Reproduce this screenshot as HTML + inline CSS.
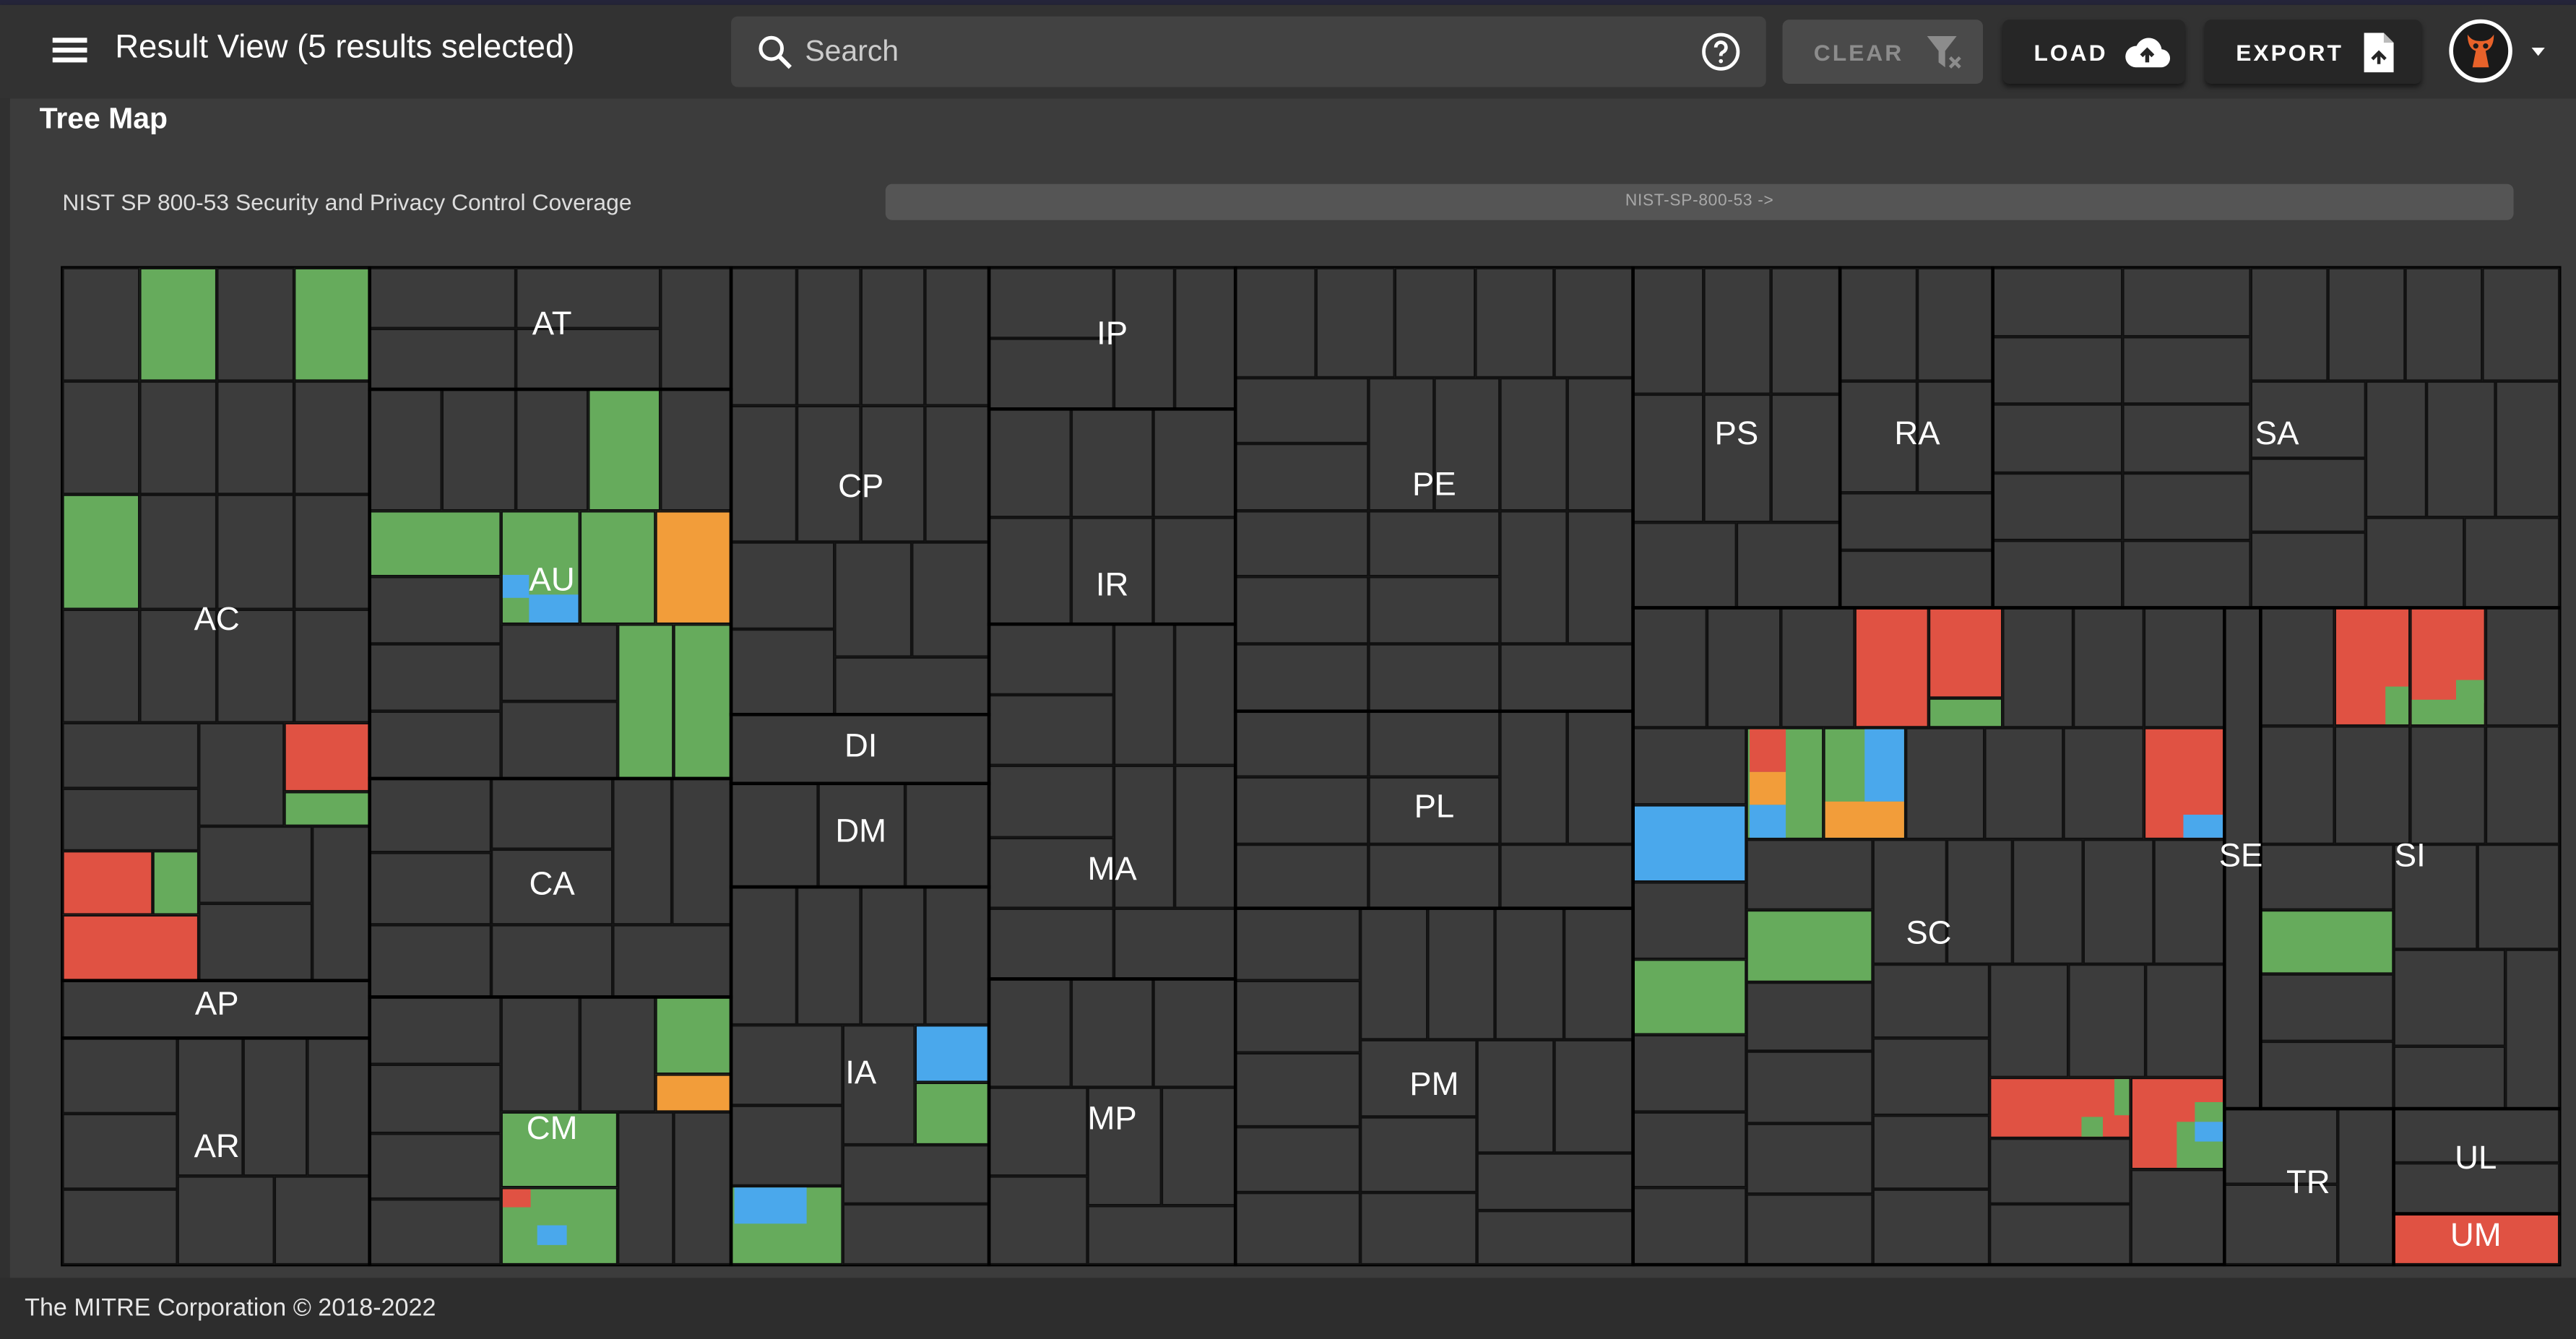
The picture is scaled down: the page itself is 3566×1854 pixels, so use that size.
<!DOCTYPE html>
<html><head><meta charset="utf-8"><style>
html,body{margin:0;padding:0;background:#2d2d2d;width:3566px;height:1854px;overflow:hidden}
#w{position:absolute;left:0;top:0;width:1568px;height:815px;transform:scale(2.27423);transform-origin:0 0;font-family:"Liberation Sans",sans-serif;color:#fff}
.a{position:absolute}
#tm i{position:absolute;box-sizing:border-box;border:1px solid #111;background:#3c3c3c;display:block}
#tm i.g{background:#66ab5c}#tm i.r{background:#e05243}#tm i.o{background:#f29d3a}#tm i.b{background:#4aa8ec}
#tm b{position:absolute;box-sizing:border-box;border:1.6px solid #000;pointer-events:none;display:block}
#tm span{position:absolute;font-size:20px;transform:translate(-50%,-50%);white-space:nowrap;color:#fff}
.btn{position:absolute;top:12px;height:39px;border-radius:4px;font-size:14px;font-weight:bold;letter-spacing:1.3px;display:flex;align-items:center;box-sizing:border-box;padding-left:19px}
</style></head><body><div id="w">
<div class="a" style="left:0;top:0;width:1568px;height:3px;background:#25253a"></div>
<div class="a" style="left:0;top:3px;width:1568px;height:57px;background:#323232;box-shadow:0 2px 4px rgba(0,0,0,.5)"></div>
<div class="a" style="left:6px;top:60px;width:1562px;height:718px;background:#3c3c3c"></div>
<div class="a" style="left:0;top:60px;width:6px;height:718px;background:#303030"></div>
<!-- hamburger -->
<div class="a" style="left:32px;top:23px;width:21px;height:2.5px;background:#fff"></div>
<div class="a" style="left:32px;top:29px;width:21px;height:2.5px;background:#fff"></div>
<div class="a" style="left:32px;top:35px;width:21px;height:2.5px;background:#fff"></div>
<div class="a" style="left:70px;top:18px;font-size:20px">Result View (5 results selected)</div>
<!-- search -->
<div class="a" style="left:445px;top:10px;width:630px;height:43px;background:#424242;border-radius:4px"></div>
<svg class="a" style="left:460px;top:20px" width="24" height="24" viewBox="0 0 24 24"><circle cx="9.5" cy="9.5" r="6.5" fill="none" stroke="#fff" stroke-width="2.2"/><path d="M14.5 14.5L21 21" stroke="#fff" stroke-width="2.6"/></svg>
<div class="a" style="left:490px;top:21px;font-size:18px;color:#ccc">Search</div>
<svg class="a" style="left:1035px;top:19px" width="25" height="25" viewBox="0 0 24 24"><circle cx="12" cy="12" r="10" fill="none" stroke="#fff" stroke-width="2"/><path d="M9 9.5a3 3 0 1 1 4.2 2.7c-.8.4-1.2 1-1.2 1.8v.5" fill="none" stroke="#fff" stroke-width="2"/><circle cx="12" cy="17.5" r="1.2" fill="#fff"/></svg>
<div class="btn" style="left:1085px;width:122px;background:#4a4a4a;color:#8c8c8c">CLEAR
<svg style="margin-left:12px" width="26" height="26" viewBox="0 0 26 26"><path d="M2 3h18l-7 9v10l-4-3v-7z" fill="#8c8c8c"/><path d="M16 16l6 6M22 16l-6 6" stroke="#8c8c8c" stroke-width="2"/></svg></div>
<div class="btn" style="left:1219px;width:111px;background:#262626;box-shadow:0 2px 3px rgba(0,0,0,.5)">LOAD
<svg style="margin-left:10px" width="28" height="22" viewBox="0 0 28 22"><path d="M7 20h15a5.5 5.5 0 0 0 .8-11A8 8 0 0 0 7.5 7 6.5 6.5 0 0 0 7 20z" fill="#fff"/><path d="M14 17V10M10.5 13l3.5-3.5 3.5 3.5" stroke="#262626" stroke-width="2.4" fill="none"/></svg></div>
<div class="btn" style="left:1342px;width:132px;background:#262626;box-shadow:0 2px 3px rgba(0,0,0,.5)">EXPORT
<svg style="margin-left:12px" width="20" height="26" viewBox="0 0 20 26"><path d="M1 1h12l6 6v18H1z" fill="#fff"/><path d="M13 1v6h6" fill="#bbb"/><path d="M6 17l4-4 4 4M10 13v7" stroke="#262626" stroke-width="2" fill="none"/></svg></div>
<svg class="a" style="left:1490px;top:11px" width="40" height="40" viewBox="0 0 40 40"><circle cx="20" cy="20" r="18" fill="#1a1a1a" stroke="#fff" stroke-width="2.5"/><path d="M12 10c0 6 2 9 5 10l-2 10h10l-2-10c3-1 5-4 5-10-2 3-4 4-8 4s-6-1-8-4z" fill="#e8622a"/><circle cx="17" cy="17" r="1.6" fill="#1a1a1a"/><circle cx="23" cy="17" r="1.6" fill="#1a1a1a"/></svg>
<div class="a" style="left:1541px;top:29px;width:0;height:0;border-left:4px solid transparent;border-right:4px solid transparent;border-top:5px solid #fff"></div>
<div class="a" style="left:24px;top:62px;font-size:18px;font-weight:bold">Tree Map</div>
<div class="a" style="left:38px;top:115px;font-size:14px;color:#ddd">NIST SP 800-53 Security and Privacy Control Coverage</div>
<div class="a" style="left:539px;top:112px;width:991px;height:22px;background:#555;border-radius:4px;font-size:10px;color:#a8a8a8;text-align:center;line-height:22px;letter-spacing:.3px">NIST-SP-800-53 -&gt;</div>
<div class="a" style="left:15px;top:788px;font-size:15px;color:#e6e6e6">The MITRE Corporation © 2018-2022</div>

<div id="tm" class="a" style="left:0;top:0;width:1568px;height:815px">
<!-- AC -->
<i style="left:38px;top:163px;width:47px;height:69px"></i><i class="g" style="left:85px;top:163px;width:47px;height:69px"></i><i style="left:132px;top:163px;width:47px;height:69px"></i><i class="g" style="left:179px;top:163px;width:46px;height:69px"></i>
<i style="left:38px;top:232px;width:47px;height:69px"></i><i style="left:85px;top:232px;width:47px;height:69px"></i><i style="left:132px;top:232px;width:47px;height:69px"></i><i style="left:179px;top:232px;width:46px;height:69px"></i>
<i class="g" style="left:38px;top:301px;width:47px;height:70px"></i><i style="left:85px;top:301px;width:47px;height:70px"></i><i style="left:132px;top:301px;width:47px;height:70px"></i><i style="left:179px;top:301px;width:46px;height:70px"></i>
<i style="left:38px;top:371px;width:47px;height:69px"></i><i style="left:85px;top:371px;width:47px;height:69px"></i><i style="left:132px;top:371px;width:47px;height:69px"></i><i style="left:179px;top:371px;width:46px;height:69px"></i>
<i style="left:38px;top:440px;width:83px;height:40px"></i><i style="left:38px;top:480px;width:83px;height:38px"></i><i style="left:121px;top:440px;width:52px;height:63px"></i>
<i class="r" style="left:173px;top:440px;width:52px;height:42px"></i><i class="g" style="left:173px;top:482px;width:52px;height:21px"></i>
<i class="r" style="left:38px;top:518px;width:55px;height:39px"></i><i class="g" style="left:93px;top:518px;width:28px;height:39px"></i>
<i class="r" style="left:38px;top:557px;width:83px;height:40px"></i>
<i style="left:121px;top:503px;width:69px;height:47px"></i><i style="left:121px;top:550px;width:69px;height:47px"></i><i style="left:190px;top:503px;width:35px;height:94px"></i>
<!-- AP -->
<i style="left:38px;top:597px;width:187px;height:35px"></i>
<!-- AR -->
<i style="left:38px;top:632px;width:70px;height:46px"></i><i style="left:38px;top:678px;width:70px;height:46px"></i><i style="left:38px;top:724px;width:70px;height:46px"></i>
<i style="left:108px;top:632px;width:40px;height:84px"></i><i style="left:148px;top:632px;width:39px;height:84px"></i><i style="left:187px;top:632px;width:38px;height:84px"></i>
<i style="left:108px;top:716px;width:59px;height:54px"></i><i style="left:167px;top:716px;width:58px;height:54px"></i>
<!-- AT -->
<i style="left:225px;top:163px;width:89px;height:37px"></i><i style="left:225px;top:200px;width:89px;height:37px"></i><i style="left:314px;top:163px;width:88px;height:37px"></i><i style="left:314px;top:200px;width:88px;height:37px"></i><i style="left:402px;top:163px;width:43px;height:74px"></i>
<!-- AU -->
<i style="left:225px;top:237px;width:44px;height:74px"></i><i style="left:269px;top:237px;width:45px;height:74px"></i><i style="left:314px;top:237px;width:44px;height:74px"></i><i class="g" style="left:358px;top:237px;width:44px;height:74px"></i><i style="left:402px;top:237px;width:43px;height:74px"></i>
<i class="g" style="left:225px;top:311px;width:80px;height:40px"></i><i style="left:225px;top:351px;width:80px;height:41px"></i><i style="left:225px;top:392px;width:80px;height:41px"></i><i style="left:225px;top:433px;width:80px;height:41px"></i>
<i class="g" style="left:305px;top:311px;width:48px;height:69px"></i><i class="b" style="left:306px;top:350px;width:16px;height:14px;border:0"></i><i class="b" style="left:322px;top:362px;width:30px;height:17px;border:0"></i>
<i class="g" style="left:353px;top:311px;width:46px;height:69px"></i><i class="o" style="left:399px;top:311px;width:46px;height:69px"></i>
<i style="left:305px;top:380px;width:71px;height:47px"></i><i style="left:305px;top:427px;width:71px;height:47px"></i><i class="g" style="left:376px;top:380px;width:34px;height:94px"></i><i class="g" style="left:410px;top:380px;width:35px;height:94px"></i>
<!-- CA -->
<i style="left:225px;top:474px;width:74px;height:45px"></i><i style="left:225px;top:519px;width:74px;height:44px"></i><i style="left:225px;top:563px;width:74px;height:44px"></i>
<i style="left:299px;top:474px;width:74px;height:43px"></i><i style="left:299px;top:517px;width:74px;height:46px"></i><i style="left:299px;top:563px;width:74px;height:44px"></i>
<i style="left:373px;top:474px;width:36px;height:89px"></i><i style="left:409px;top:474px;width:36px;height:89px"></i><i style="left:373px;top:563px;width:72px;height:44px"></i>
<!-- CM -->
<i style="left:225px;top:607px;width:80px;height:41px"></i><i style="left:225px;top:648px;width:80px;height:42px"></i><i style="left:225px;top:690px;width:80px;height:40px"></i><i style="left:225px;top:730px;width:80px;height:40px"></i>
<i style="left:305px;top:607px;width:48px;height:70px"></i><i style="left:353px;top:607px;width:46px;height:70px"></i><i class="g" style="left:399px;top:607px;width:46px;height:47px"></i><i class="o" style="left:399px;top:654px;width:46px;height:23px"></i>
<i class="g" style="left:305px;top:677px;width:71px;height:46px"></i><i class="g" style="left:305px;top:723px;width:71px;height:47px"></i><i class="r" style="left:306px;top:724px;width:17px;height:11px;border:0"></i><i class="b" style="left:327px;top:746px;width:18px;height:12px;border:0"></i>
<i style="left:376px;top:677px;width:34px;height:93px"></i><i style="left:410px;top:677px;width:35px;height:93px"></i>
<!-- CP -->
<i style="left:445px;top:163px;width:40px;height:84px"></i><i style="left:485px;top:163px;width:39px;height:84px"></i><i style="left:524px;top:163px;width:39px;height:84px"></i><i style="left:563px;top:163px;width:39px;height:84px"></i>
<i style="left:445px;top:247px;width:40px;height:83px"></i><i style="left:485px;top:247px;width:39px;height:83px"></i><i style="left:524px;top:247px;width:39px;height:83px"></i><i style="left:563px;top:247px;width:39px;height:83px"></i>
<i style="left:445px;top:330px;width:63px;height:53px"></i><i style="left:445px;top:383px;width:63px;height:52px"></i><i style="left:508px;top:330px;width:47px;height:70px"></i><i style="left:555px;top:330px;width:47px;height:70px"></i><i style="left:508px;top:400px;width:94px;height:35px"></i>
<!-- DI DM -->
<i style="left:445px;top:435px;width:157px;height:42px"></i>
<i style="left:445px;top:477px;width:53px;height:63px"></i><i style="left:498px;top:477px;width:53px;height:63px"></i><i style="left:551px;top:477px;width:51px;height:63px"></i>
<!-- IA -->
<i style="left:445px;top:540px;width:40px;height:84px"></i><i style="left:485px;top:540px;width:39px;height:84px"></i><i style="left:524px;top:540px;width:39px;height:84px"></i><i style="left:563px;top:540px;width:39px;height:84px"></i>
<i style="left:445px;top:624px;width:68px;height:49px"></i><i style="left:445px;top:673px;width:68px;height:49px"></i><i class="g" style="left:445px;top:722px;width:68px;height:48px"></i><i class="b" style="left:447px;top:723px;width:44px;height:22px;border:0"></i>
<i style="left:513px;top:624px;width:44px;height:73px"></i><i class="b" style="left:557px;top:624px;width:45px;height:35px"></i><i class="g" style="left:557px;top:659px;width:45px;height:38px"></i>
<i style="left:513px;top:697px;width:89px;height:36px"></i><i style="left:513px;top:733px;width:89px;height:37px"></i>
<!-- IP -->
<i style="left:602px;top:163px;width:76px;height:43px"></i><i style="left:602px;top:206px;width:76px;height:43px"></i><i style="left:678px;top:163px;width:37px;height:86px"></i><i style="left:715px;top:163px;width:37px;height:86px"></i>
<!-- IR -->
<i style="left:602px;top:249px;width:50px;height:66px"></i><i style="left:652px;top:249px;width:50px;height:66px"></i><i style="left:702px;top:249px;width:50px;height:66px"></i>
<i style="left:602px;top:315px;width:50px;height:65px"></i><i style="left:652px;top:315px;width:50px;height:65px"></i><i style="left:702px;top:315px;width:50px;height:65px"></i>
<!-- MA -->
<i style="left:602px;top:380px;width:76px;height:43px"></i><i style="left:602px;top:423px;width:76px;height:43px"></i><i style="left:678px;top:380px;width:37px;height:86px"></i><i style="left:715px;top:380px;width:37px;height:86px"></i>
<i style="left:602px;top:466px;width:76px;height:44px"></i><i style="left:602px;top:510px;width:76px;height:43px"></i><i style="left:678px;top:466px;width:37px;height:87px"></i><i style="left:715px;top:466px;width:37px;height:87px"></i>
<i style="left:602px;top:553px;width:76px;height:43px"></i><i style="left:678px;top:553px;width:74px;height:43px"></i>
<!-- MP -->
<i style="left:602px;top:596px;width:50px;height:66px"></i><i style="left:652px;top:596px;width:50px;height:66px"></i><i style="left:702px;top:596px;width:50px;height:66px"></i>
<i style="left:602px;top:662px;width:60px;height:54px"></i><i style="left:602px;top:716px;width:60px;height:54px"></i><i style="left:662px;top:662px;width:45px;height:72px"></i><i style="left:707px;top:662px;width:45px;height:72px"></i><i style="left:662px;top:734px;width:90px;height:36px"></i>
<!-- PE -->
<i style="left:752px;top:163px;width:49px;height:67px"></i><i style="left:801px;top:163px;width:48px;height:67px"></i><i style="left:849px;top:163px;width:49px;height:67px"></i><i style="left:898px;top:163px;width:48px;height:67px"></i><i style="left:946px;top:163px;width:48px;height:67px"></i>
<i style="left:752px;top:230px;width:81px;height:40px"></i><i style="left:752px;top:270px;width:81px;height:41px"></i><i style="left:752px;top:311px;width:81px;height:40px"></i><i style="left:752px;top:351px;width:81px;height:41px"></i><i style="left:752px;top:392px;width:81px;height:41px"></i>
<i style="left:833px;top:230px;width:40px;height:81px"></i><i style="left:873px;top:230px;width:40px;height:81px"></i><i style="left:913px;top:230px;width:41px;height:81px"></i><i style="left:954px;top:230px;width:40px;height:81px"></i>
<i style="left:833px;top:311px;width:80px;height:40px"></i><i style="left:833px;top:351px;width:80px;height:41px"></i><i style="left:913px;top:311px;width:41px;height:81px"></i><i style="left:954px;top:311px;width:40px;height:81px"></i>
<i style="left:833px;top:392px;width:80px;height:41px"></i><i style="left:913px;top:392px;width:81px;height:41px"></i>
<!-- PL -->
<i style="left:752px;top:433px;width:81px;height:40px"></i><i style="left:752px;top:473px;width:81px;height:41px"></i><i style="left:752px;top:514px;width:81px;height:39px"></i>
<i style="left:833px;top:433px;width:80px;height:40px"></i><i style="left:833px;top:473px;width:80px;height:41px"></i><i style="left:833px;top:514px;width:80px;height:39px"></i>
<i style="left:913px;top:433px;width:41px;height:81px"></i><i style="left:954px;top:433px;width:40px;height:81px"></i><i style="left:913px;top:514px;width:81px;height:39px"></i>
<!-- PM -->
<i style="left:752px;top:553px;width:76px;height:44px"></i><i style="left:752px;top:597px;width:76px;height:44px"></i><i style="left:752px;top:641px;width:76px;height:45px"></i><i style="left:752px;top:686px;width:76px;height:40px"></i><i style="left:752px;top:726px;width:76px;height:44px"></i>
<i style="left:828px;top:553px;width:41px;height:80px"></i><i style="left:869px;top:553px;width:41px;height:80px"></i><i style="left:910px;top:553px;width:42px;height:80px"></i><i style="left:952px;top:553px;width:42px;height:80px"></i>
<i style="left:828px;top:633px;width:71px;height:47px"></i><i style="left:828px;top:680px;width:71px;height:46px"></i><i style="left:828px;top:726px;width:71px;height:44px"></i>
<i style="left:899px;top:633px;width:47px;height:69px"></i><i style="left:946px;top:633px;width:48px;height:69px"></i><i style="left:899px;top:702px;width:95px;height:35px"></i><i style="left:899px;top:737px;width:95px;height:33px"></i>
<!-- PS -->
<i style="left:994px;top:163px;width:43px;height:77px"></i><i style="left:1037px;top:163px;width:41px;height:77px"></i><i style="left:1078px;top:163px;width:42px;height:77px"></i>
<i style="left:994px;top:240px;width:43px;height:78px"></i><i style="left:1037px;top:240px;width:41px;height:78px"></i><i style="left:1078px;top:240px;width:42px;height:78px"></i>
<i style="left:994px;top:318px;width:63px;height:52px"></i><i style="left:1057px;top:318px;width:63px;height:52px"></i>
<!-- RA -->
<i style="left:1120px;top:163px;width:47px;height:69px"></i><i style="left:1167px;top:163px;width:46px;height:69px"></i><i style="left:1120px;top:232px;width:47px;height:68px"></i><i style="left:1167px;top:232px;width:46px;height:68px"></i>
<i style="left:1120px;top:300px;width:93px;height:35px"></i><i style="left:1120px;top:335px;width:93px;height:35px"></i>
<!-- SA -->
<i style="left:1213px;top:163px;width:79px;height:42px"></i><i style="left:1292px;top:163px;width:78px;height:42px"></i>
<i style="left:1213px;top:205px;width:79px;height:41px"></i><i style="left:1292px;top:205px;width:78px;height:41px"></i>
<i style="left:1213px;top:246px;width:79px;height:42px"></i><i style="left:1292px;top:246px;width:78px;height:42px"></i>
<i style="left:1213px;top:288px;width:79px;height:41px"></i><i style="left:1292px;top:288px;width:78px;height:41px"></i>
<i style="left:1213px;top:329px;width:79px;height:41px"></i><i style="left:1292px;top:329px;width:78px;height:41px"></i>
<i style="left:1370px;top:163px;width:47px;height:69px"></i><i style="left:1417px;top:163px;width:47px;height:69px"></i><i style="left:1464px;top:163px;width:47px;height:69px"></i><i style="left:1511px;top:163px;width:47px;height:69px"></i>
<i style="left:1370px;top:232px;width:70px;height:47px"></i><i style="left:1370px;top:279px;width:70px;height:45px"></i><i style="left:1370px;top:324px;width:70px;height:46px"></i>
<i style="left:1440px;top:232px;width:37px;height:83px"></i><i style="left:1477px;top:232px;width:42px;height:83px"></i><i style="left:1519px;top:232px;width:39px;height:83px"></i>
<i style="left:1440px;top:315px;width:60px;height:55px"></i><i style="left:1500px;top:315px;width:58px;height:55px"></i>
<!-- SC -->
<i style="left:994px;top:370px;width:45px;height:73px"></i><i style="left:1039px;top:370px;width:45px;height:73px"></i><i style="left:1084px;top:370px;width:45px;height:73px"></i><i class="r" style="left:1129px;top:370px;width:45px;height:73px"></i>
<i class="r" style="left:1174px;top:370px;width:45px;height:55px"></i><i class="g" style="left:1174px;top:425px;width:45px;height:18px"></i>
<i style="left:1219px;top:370px;width:43px;height:73px"></i><i style="left:1262px;top:370px;width:43px;height:73px"></i><i style="left:1305px;top:370px;width:49px;height:73px"></i>
<i style="left:994px;top:443px;width:69px;height:47px"></i><i class="b" style="left:994px;top:490px;width:69px;height:47px"></i><i style="left:994px;top:537px;width:69px;height:47px"></i><i class="g" style="left:994px;top:584px;width:69px;height:46px"></i><i style="left:994px;top:630px;width:69px;height:47px"></i><i style="left:994px;top:677px;width:69px;height:46px"></i><i style="left:994px;top:723px;width:69px;height:47px"></i>
<i class="g" style="left:1063px;top:443px;width:47px;height:68px"></i><i class="r" style="left:1065px;top:444px;width:22px;height:26px;border:0"></i><i class="o" style="left:1065px;top:470px;width:22px;height:20px;border:0"></i><i class="b" style="left:1065px;top:490px;width:22px;height:20px;border:0"></i>
<i class="g" style="left:1110px;top:443px;width:50px;height:68px"></i><i class="b" style="left:1135px;top:444px;width:24px;height:44px;border:0"></i><i class="o" style="left:1111px;top:488px;width:48px;height:22px;border:0"></i>
<i style="left:1160px;top:443px;width:48px;height:68px"></i><i style="left:1208px;top:443px;width:48px;height:68px"></i><i style="left:1256px;top:443px;width:49px;height:68px"></i>
<i class="r" style="left:1305px;top:443px;width:49px;height:68px"></i><i class="b" style="left:1329px;top:496px;width:24px;height:14px;border:0"></i>
<i style="left:1063px;top:511px;width:77px;height:43px"></i><i class="g" style="left:1063px;top:554px;width:77px;height:44px"></i><i style="left:1063px;top:598px;width:77px;height:42px"></i><i style="left:1063px;top:640px;width:77px;height:44px"></i><i style="left:1063px;top:684px;width:77px;height:43px"></i><i style="left:1063px;top:727px;width:77px;height:43px"></i>
<i style="left:1140px;top:511px;width:45px;height:76px"></i><i style="left:1185px;top:511px;width:40px;height:76px"></i><i style="left:1225px;top:511px;width:43px;height:76px"></i><i style="left:1268px;top:511px;width:43px;height:76px"></i><i style="left:1311px;top:511px;width:43px;height:76px"></i>
<i style="left:1140px;top:587px;width:71px;height:45px"></i><i style="left:1140px;top:632px;width:71px;height:47px"></i><i style="left:1140px;top:679px;width:71px;height:45px"></i><i style="left:1140px;top:724px;width:71px;height:46px"></i>
<i style="left:1211px;top:587px;width:48px;height:69px"></i><i style="left:1259px;top:587px;width:47px;height:69px"></i><i style="left:1306px;top:587px;width:48px;height:69px"></i>
<i class="r" style="left:1211px;top:656px;width:86px;height:37px"></i><i class="g" style="left:1287px;top:657px;width:9px;height:22px;border:0"></i><i class="g" style="left:1267px;top:680px;width:13px;height:12px;border:0"></i>
<i class="r" style="left:1297px;top:656px;width:57px;height:56px"></i><i class="g" style="left:1325px;top:683px;width:28px;height:28px;border:0"></i><i class="g" style="left:1336px;top:671px;width:17px;height:12px;border:0"></i><i class="b" style="left:1336px;top:683px;width:17px;height:12px;border:0"></i>
<i style="left:1211px;top:693px;width:86px;height:40px"></i><i style="left:1211px;top:733px;width:86px;height:37px"></i><i style="left:1297px;top:712px;width:57px;height:58px"></i>
<!-- SE -->
<i style="left:1354px;top:370px;width:22px;height:305px"></i>
<!-- SI -->
<i style="left:1376px;top:370px;width:45px;height:72px"></i><i class="r" style="left:1421px;top:370px;width:46px;height:72px"></i><i class="g" style="left:1452px;top:418px;width:14px;height:23px;border:0"></i>
<i class="r" style="left:1467px;top:370px;width:46px;height:72px"></i><i class="g" style="left:1468px;top:426px;width:44px;height:15px;border:0"></i><i class="g" style="left:1495px;top:414px;width:17px;height:14px;border:0"></i>
<i style="left:1513px;top:370px;width:45px;height:72px"></i>
<i style="left:1376px;top:442px;width:45px;height:72px"></i><i style="left:1421px;top:442px;width:46px;height:72px"></i><i style="left:1467px;top:442px;width:46px;height:72px"></i><i style="left:1513px;top:442px;width:45px;height:72px"></i>
<i style="left:1376px;top:514px;width:81px;height:40px"></i><i class="g" style="left:1376px;top:554px;width:81px;height:39px"></i><i style="left:1376px;top:593px;width:81px;height:41px"></i><i style="left:1376px;top:634px;width:81px;height:41px"></i>
<i style="left:1457px;top:514px;width:51px;height:64px"></i><i style="left:1508px;top:514px;width:50px;height:64px"></i><i style="left:1457px;top:578px;width:68px;height:59px"></i><i style="left:1457px;top:637px;width:68px;height:38px"></i><i style="left:1525px;top:578px;width:33px;height:97px"></i>
<!-- TR UL UM -->
<i style="left:1354px;top:675px;width:69px;height:46px"></i><i style="left:1354px;top:721px;width:69px;height:49px"></i><i style="left:1423px;top:675px;width:34px;height:95px"></i>
<i style="left:1457px;top:675px;width:101px;height:33px"></i><i style="left:1457px;top:708px;width:101px;height:31px"></i><i class="r" style="left:1457px;top:739px;width:101px;height:31px"></i>

<!-- family borders -->
<b style="left:37px;top:162px;width:189px;height:436px"></b>
<b style="left:37px;top:596px;width:189px;height:37px"></b>
<b style="left:37px;top:631px;width:189px;height:140px"></b>
<b style="left:224px;top:162px;width:222px;height:76px"></b>
<b style="left:224px;top:236px;width:222px;height:239px"></b>
<b style="left:224px;top:473px;width:222px;height:135px"></b>
<b style="left:224px;top:606px;width:222px;height:165px"></b>
<b style="left:444px;top:162px;width:159px;height:274px"></b>
<b style="left:444px;top:434px;width:159px;height:44px"></b>
<b style="left:444px;top:476px;width:159px;height:65px"></b>
<b style="left:444px;top:539px;width:159px;height:232px"></b>
<b style="left:601px;top:162px;width:152px;height:88px"></b>
<b style="left:601px;top:248px;width:152px;height:133px"></b>
<b style="left:601px;top:379px;width:152px;height:218px"></b>
<b style="left:601px;top:595px;width:152px;height:176px"></b>
<b style="left:751px;top:162px;width:244px;height:272px"></b>
<b style="left:751px;top:432px;width:244px;height:122px"></b>
<b style="left:751px;top:552px;width:244px;height:219px"></b>
<b style="left:993px;top:162px;width:128px;height:209px"></b>
<b style="left:1119px;top:162px;width:95px;height:209px"></b>
<b style="left:1212px;top:162px;width:347px;height:209px"></b>
<b style="left:993px;top:369px;width:362px;height:402px;border-width:2.5px"></b>
<b style="left:1353px;top:369px;width:24px;height:307px"></b>
<b style="left:1375px;top:369px;width:184px;height:307px"></b>
<b style="left:1353px;top:674px;width:105px;height:97px"></b>
<b style="left:1456px;top:674px;width:103px;height:66px"></b>
<b style="left:1456px;top:738px;width:103px;height:33px"></b>

<span style="left:132px;top:378px">AC</span><span style="left:132px;top:612px">AP</span><span style="left:132px;top:699px">AR</span>
<span style="left:336px;top:198px">AT</span><span style="left:336px;top:354px">AU</span><span style="left:336px;top:539px">CA</span><span style="left:336px;top:688px">CM</span>
<span style="left:524px;top:297px">CP</span><span style="left:524px;top:455px">DI</span><span style="left:524px;top:507px">DM</span><span style="left:524px;top:654px">IA</span>
<span style="left:677px;top:204px">IP</span><span style="left:677px;top:357px">IR</span><span style="left:677px;top:530px">MA</span><span style="left:677px;top:682px">MP</span>
<span style="left:873px;top:296px">PE</span><span style="left:873px;top:492px">PL</span><span style="left:873px;top:661px">PM</span>
<span style="left:1057px;top:265px">PS</span><span style="left:1167px;top:265px">RA</span><span style="left:1386px;top:265px">SA</span>
<span style="left:1174px;top:569px">SC</span><span style="left:1364px;top:522px">SE</span><span style="left:1467px;top:522px">SI</span>
<span style="left:1405px;top:721px">TR</span><span style="left:1507px;top:706px">UL</span><span style="left:1507px;top:753px">UM</span>
</div>
</div></body></html>
